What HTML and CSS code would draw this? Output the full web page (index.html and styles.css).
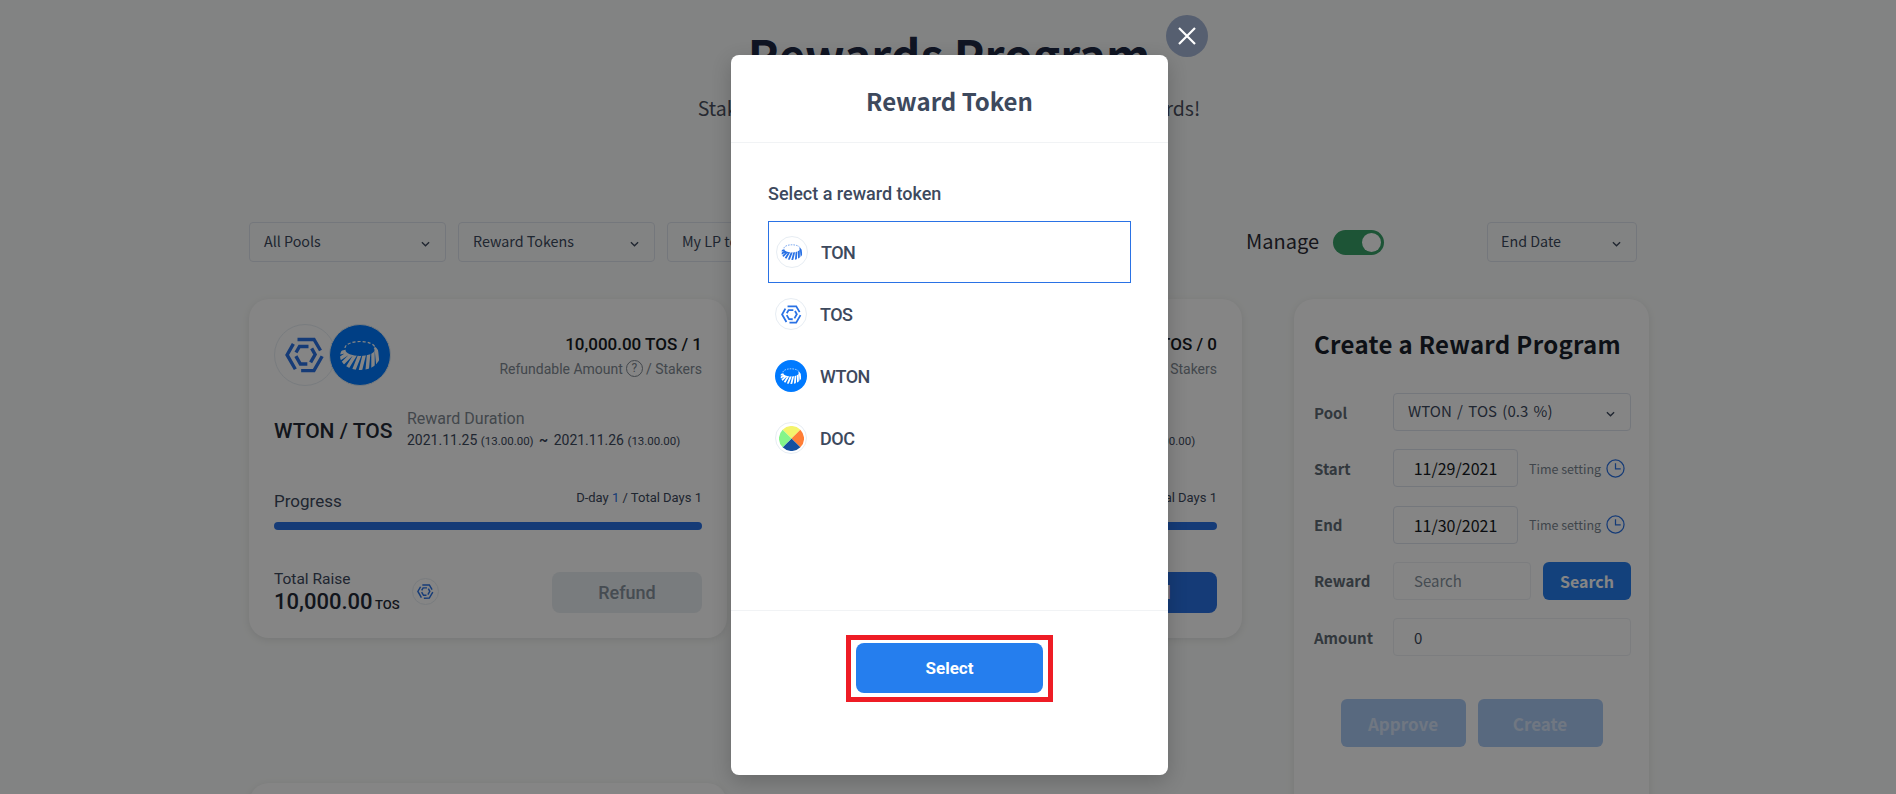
FILE: index.html
```html
<!DOCTYPE html>
<html lang="en">
<head>
  <meta charset="UTF-8">
  <meta name="viewport" content="width=device-width, initial-scale=1.0">
  <title>Rewards Program</title>
  <link rel="stylesheet" href="styles.css">
</head>
<body>
  <!-- Icons -->
  <svg class="defs" width="0" height="0">
    <clipPath id="ton-ring">
      <path clip-rule="evenodd" d="M0 16a20 14 0 1 0 40 0a20 14 0 1 0 -40 0ZM5.500 10a14.500 6 0 1 0 29 0a14.500 6 0 1 0 -29 0Z"/>
    </clipPath>
    <symbol id="i-tos" viewBox="0 0 40 40">
      <g fill="none" stroke="currentColor" stroke-width="3.400">
        <g id="tos-arm">
          <path d="M12.500 4.500H29L35.500 15.500"/>
          <path d="M11 17.500L14.500 11.500H23.500"/>
        </g>
        <use href="#tos-arm" transform="rotate(120 20 20)"/>
        <use href="#tos-arm" transform="rotate(240 20 20)"/>
      </g>
    </symbol>
    <symbol id="i-ton" viewBox="0 0 40 30">
      <g fill="none" stroke="currentColor">
        <path d="M5 8A15 6.500 0 0 1 35 8" stroke-width="1.200" stroke-dasharray="3 2"/>
        <g clip-path="url(#ton-ring)">
          <path d="M-1 13L8 11M-2 20L10 12M0 26L14 12M6 30L17 12M13 32L21 12M20 32L25 12M27 32L29 10M33 30L33 8M38 26L36 6" stroke-width="3.400"/>
        </g>
      </g>
    </symbol>
    <symbol id="i-chevron" viewBox="0 0 10 6">
      <path d="M1 1l4 4 4-4" fill="none" stroke="currentColor" stroke-width="1.500"/>
    </symbol>
    <symbol id="i-clock" viewBox="0 0 20 20">
      <circle cx="10" cy="10" r="9" fill="none" stroke="currentColor" stroke-width="1.300"/>
      <path d="M10 4.500V10.500H15.500" fill="none" stroke="currentColor" stroke-width="1.300"/>
    </symbol>
  </svg>

  <div class="page">
    <header class="intro">
      <h1>Rewards Program</h1>
      <p>Stake in Uniswap V3 pools and earn additional rewards!</p>
    </header>

    <div class="filters">
      <div class="select select-pools"><span>All Pools</span> <svg class="chevron"><use href="#i-chevron"/></svg></div>
      <div class="select select-pools"><span>Reward Tokens</span> <svg class="chevron"><use href="#i-chevron"/></svg></div>
      <div class="select select-pools"><span>My LP tokens</span> <svg class="chevron"><use href="#i-chevron"/></svg></div>
      <div class="manage">
        <span>Manage</span>
        <span class="toggle"><span class="knob"></span></span>
      </div>
      <div class="select select-date"><span>End Date</span> <svg class="chevron"><use href="#i-chevron"/></svg></div>
    </div>

    <main class="board">
      <!-- Reward card -->
      <section class="card">
        <div class="card-top">
          <div class="pair">
            <span class="coin coin-tos"><svg class="coin-tos-mark"><use href="#i-tos"/></svg></span>
            <span class="coin coin-ton"><svg class="coin-ton-mark"><use href="#i-ton"/></svg></span>
          </div>
          <div class="refund-info">
            <div class="amount">10,000.00 TOS / 1</div>
            <div class="amount-sub">Refundable Amount <span class="help">?</span> / Stakers</div>
          </div>
        </div>
        <div class="card-name">
          <h3>WTON / TOS</h3>
          <div class="duration">
            <div class="duration-label">Reward Duration</div>
            <div class="dates">2021.11.25 <small>(13.00.00)</small> <b>~</b> 2021.11.26 <small>(13.00.00)</small></div>
          </div>
        </div>
        <div class="progress-head">
          <span class="progress-label">Progress</span>
          <span class="days">D-day <em>1</em> / Total Days 1</span>
        </div>
        <div class="bar"></div>
        <div class="card-foot">
          <div class="raise">
            <div class="raise-label">Total Raise</div>
            <div class="raise-value">10,000.00 <small>TOS</small></div>
          </div>
          <span class="coin-mini"><svg><use href="#i-tos"/></svg></span>
          <button class="refund">Refund</button>
        </div>
      </section>

      <section class="card">
        <div class="card-top">
          <div class="pair">
            <span class="coin coin-tos"><svg class="coin-tos-mark"><use href="#i-tos"/></svg></span>
            <span class="coin coin-ton"><svg class="coin-ton-mark"><use href="#i-ton"/></svg></span>
          </div>
          <div class="refund-info">
            <div class="amount">10,000.00 TOS / 0</div>
            <div class="amount-sub">Refundable Amount <span class="help">?</span> / Stakers</div>
          </div>
        </div>
        <div class="card-name">
          <h3>WTON / TOS</h3>
          <div class="duration">
            <div class="duration-label">Reward Duration</div>
            <div class="dates">2021.11.25 <small>(13.00.00)</small> <b>~</b> 2021.11.26 <small>(13.00.00)</small></div>
          </div>
        </div>
        <div class="progress-head">
          <span class="progress-label">Progress</span>
          <span class="days">D-day <em>1</em> / Total Days 1</span>
        </div>
        <div class="bar"></div>
        <div class="card-foot">
          <div class="raise">
            <div class="raise-label">Total Raise</div>
            <div class="raise-value">10,000.00 <small>TOS</small></div>
          </div>
          <span class="coin-mini"><svg><use href="#i-tos"/></svg></span>
          <button class="refund refund-on">Refund</button>
        </div>
      </section>

      <!-- Create form -->
      <aside class="card create">
        <h2>Create a Reward Program</h2>
        <div class="form">
          <div class="row">
            <label>Pool</label>
            <div class="select select-form"><span>WTON / TOS (0.3 %)</span> <svg class="chevron"><use href="#i-chevron"/></svg></div>
          </div>
          <div class="row">
            <label>Start</label>
            <div class="date">11/29/2021</div>
            <span class="time">Time setting</span>
            <svg class="clock"><use href="#i-clock"/></svg>
          </div>
          <div class="row">
            <label>End</label>
            <div class="date">11/30/2021</div>
            <span class="time">Time setting</span>
            <svg class="clock"><use href="#i-clock"/></svg>
          </div>
          <div class="row">
            <label>Reward</label>
            <div class="field field-search">Search</div>
            <button class="search">Search</button>
          </div>
          <div class="row">
            <label>Amount</label>
            <div class="field field-amount">0</div>
          </div>
        </div>
        <div class="actions">
          <button class="action">Approve</button>
          <button class="action">Create</button>
        </div>
      </aside>

      <section class="card card-empty"></section>
    </main>
  </div>

  <!-- Modal -->
  <div class="overlay">
    <div class="modal">
      <button class="close" aria-label="Close">
        <svg width="20" height="20" viewBox="0 0 20 20"><path d="M2 2L18 18M18 2L2 18" stroke="#fff" stroke-width="2.200" fill="none"/></svg>
      </button>
      <div class="modal-head">Reward Token</div>
      <div class="modal-body">
        <div class="modal-label">Select a reward token</div>
        <div class="token token-on">
          <span class="token-icon"><svg class="mark-ton"><use href="#i-ton"/></svg></span>TON
        </div>
        <div class="token">
          <span class="token-icon"><svg class="mark-tos"><use href="#i-tos"/></svg></span>TOS
        </div>
        <div class="token">
          <span class="token-icon token-icon-wton"><svg class="mark-ton"><use href="#i-ton"/></svg></span>WTON
        </div>
        <div class="token">
          <span class="token-icon">
            <svg class="mark-doc" viewBox="0 0 24 24">
              <path d="M12 12L3.500 3.500A12 12 0 0 1 20.500 3.500Z" fill="#f4f46c"/>
              <path d="M12 12L20.500 3.500A12 12 0 0 1 20.500 20.500Z" fill="#ff7e36"/>
              <path d="M12 12L20.500 20.500A12 12 0 0 1 3.500 20.500Z" fill="#1650a0"/>
              <path d="M12 12L3.500 20.500A12 12 0 0 1 3.500 3.500Z" fill="#84f58a"/>
            </svg>
          </span>DOC
        </div>
      </div>
      <div class="modal-foot">
        <div class="highlight">
          <button class="select-btn">Select</button>
        </div>
      </div>
    </div>
  </div>
</body>
</html>
```

FILE: styles.css
```css
/* Page */
body {
  margin: 0;
  height: 794px;
  overflow: hidden;
  position: relative;
  background-color: #fafcfb;
  color: #1a202c;
  font-family: "Noto Sans CJK KR", "Noto Sans", sans-serif;
}

button {
  border: none;
  font-family: inherit;
}

.defs {
  position: absolute;
}

.page {
  width: 1400px;
  margin-left: 249px;
}

.intro {
  text-align: center;
  height: 222px;
}

.intro h1 {
  margin: 0;
  padding-top: 24px;
  font-size: 46px;
  line-height: 60px;
  font-weight: 700;
  color: #1f2a44;
}

.intro p {
  margin: 11px 0 0;
  font-size: 19.500px;
  line-height: 26px;
  color: #4a5060;
}

/* Filters */
.filters {
  display: flex;
  align-items: center;
  gap: 12px;
  padding-right: 12px;
}

.select {
  display: flex;
  align-items: center;
  justify-content: space-between;
  box-sizing: border-box;
  height: 40px;
  padding: 0 15px 0 14px;
  border: 1px solid #dfe4ee;
  border-radius: 4px;
  font-size: 14.300px;
  color: #3d495d;
}

.select span {
  margin-top: -4px;
}

.select-pools {
  width: 197px;
}

.select-date {
  width: 150px;
  padding-left: 13px;
}

.select-form {
  width: 238px;
  height: 38px;
  font-size: 15px;
  word-spacing: 2px;
}

.chevron {
  width: 9px;
  height: 6px;
  margin-top: 3px;
  color: #3d495d;
}

.manage {
  display: flex;
  align-items: center;
  gap: 14px;
  margin-left: auto;
  margin-right: 91px;
  font-size: 20px;
  color: #2b2b35;
}

.manage > span:first-child {
  margin-top: -4px;
}

.toggle {
  display: flex;
  justify-content: flex-end;
  align-items: center;
  box-sizing: border-box;
  width: 51px;
  height: 25px;
  padding: 3px;
  border-radius: 13px;
  background-color: #38a169;
}

.knob {
  width: 19px;
  height: 19px;
  border-radius: 50%;
  background-color: #fff;
}

/* Cards */
.board {
  display: grid;
  grid-template-columns: 478px 478px 355px;
  grid-template-rows: 339px 300px;
  column-gap: 37px;
  row-gap: 145px;
  margin-top: 37px;
}

.card {
  box-sizing: border-box;
  padding: 25px;
  background-color: #fff;
  border-radius: 20px;
  box-shadow: 0 2px 8px rgba(0, 0, 0, 0.1);
  font-family: Roboto, sans-serif;
}

.create {
  grid-column: 3;
  grid-row: 1 / span 2;
  margin-left: 15px;
  width: 355px;
  padding: 20px 18px 0 20px;
  font-family: "Noto Sans CJK KR", "Noto Sans", sans-serif;
}

.card-empty {
  grid-row: 2;
}

.card-top {
  display: flex;
  justify-content: space-between;
  align-items: center;
}

.pair {
  display: flex;
}

.coin {
  display: flex;
  align-items: center;
  justify-content: center;
  box-sizing: border-box;
  width: 62px;
  height: 62px;
  border: 1px solid #e7edf3;
  border-radius: 50%;
  background-color: #fff;
}

.coin-ton {
  margin-left: -7px;
  background-color: #007aff;
  color: #fff;
}

.coin-tos {
  color: #2a72e5;
}

.coin-tos-mark {
  width: 40px;
  height: 40px;
}

.coin-ton-mark {
  width: 40px;
  height: 30px;
}

.refund-info {
  text-align: right;
}

.amount {
  font-size: 17px;
  line-height: 24px;
  font-weight: 500;
  color: #161a22;
}

.amount-sub {
  display: flex;
  justify-content: flex-end;
  align-items: center;
  gap: 3px;
  margin-top: 3px;
  font-size: 14px;
  line-height: 20px;
  color: #808992;
}

.help {
  display: inline-block;
  width: 15px;
  height: 15px;
  border: 1px solid #808992;
  border-radius: 50%;
  font-size: 12px;
  line-height: 15px;
  text-align: center;
}

.card-name {
  display: flex;
  align-items: center;
  margin-top: 23px;
}

.card-name h3 {
  flex: none;
  width: 133px;
  margin: 0;
  font-size: 21px;
  line-height: 30px;
  font-weight: 500;
  white-space: nowrap;
  color: #232a36;
}

.duration-label {
  font-size: 16px;
  line-height: 20px;
  color: #808992;
}

.dates {
  font-size: 14px;
  line-height: 22px;
  white-space: nowrap;
  color: #3d495d;
}

.dates small {
  font-size: 11.500px;
}

.dates b {
  margin: 0 2px;
}

.progress-head {
  display: flex;
  justify-content: space-between;
  align-items: flex-start;
  margin-top: 36px;
  height: 34px;
}

.progress-label {
  font-size: 17px;
  line-height: 26px;
  color: #3d495d;
}

.days {
  font-size: 13px;
  line-height: 20px;
  color: #3d495d;
}

.days em {
  font-style: normal;
  color: #2a72e5;
}

.bar {
  height: 8px;
  border-radius: 4px;
  background-color: #2a72e5;
}

.card-foot {
  display: flex;
  align-items: flex-start;
  margin-top: 40px;
}

.raise {
  width: 138px;
}

.raise-label {
  font-size: 15.500px;
  line-height: 19px;
  color: #3d495d;
}

.raise-value {
  font-size: 22px;
  line-height: 26px;
  font-weight: 500;
  white-space: nowrap;
  color: #232a36;
}

.raise-value small {
  margin-left: -3px;
  font-size: 13px;
}

.coin-mini {
  display: flex;
  align-items: center;
  justify-content: center;
  box-sizing: border-box;
  width: 27px;
  height: 27px;
  margin-top: 8px;
  border: 1px solid #e7edf3;
  border-radius: 50%;
  color: #2a72e5;
}

.coin-mini svg {
  width: 17px;
  height: 17px;
}

.refund {
  width: 150px;
  height: 41px;
  margin-top: 2px;
  margin-left: auto;
  border-radius: 8px;
  background-color: #e9edf1;
  color: #86929d;
  font-size: 18px;
  font-weight: 500;
  font-family: Roboto, sans-serif;
}

.refund-on {
  background-color: #2a72e5;
  color: #fff;
}

/* Create form */
.create h2 {
  margin: 0;
  font-size: 24px;
  line-height: 50px;
  letter-spacing: 0.300px;
  color: #1a1f2b;
}

.form {
  display: flex;
  flex-direction: column;
  gap: 18.300px;
  margin-top: 24px;
}

.row {
  display: flex;
  align-items: center;
  height: 38px;
}

.row label {
  width: 79px;
  flex: none;
  font-size: 15px;
  font-weight: 700;
  color: #616b76;
}

.date,
.field {
  display: flex;
  align-items: center;
  box-sizing: border-box;
  height: 38px;
  border: 1px solid #dfe4ee;
  border-radius: 4px;
  font-size: 16px;
}

.date {
  justify-content: center;
  width: 125px;
  color: #161a22;
}

.time {
  margin-left: 11px;
  font-size: 12.500px;
  color: #7a8591;
}

.clock {
  width: 19px;
  height: 19px;
  margin-left: 5px;
  color: #2a72e5;
}

.field {
  padding-left: 20px;
  border-color: #edf0f4;
}

.field-search {
  width: 138px;
  font-size: 15px;
  color: #86929d;
}

.field-amount {
  width: 238px;
  font-size: 15px;
  color: #3d495d;
}

.search {
  width: 88px;
  height: 38px;
  margin-left: 12px;
  border-radius: 6px;
  background-color: #257eee;
  color: #fff;
  font-size: 16px;
  font-weight: 700;
}

.actions {
  display: flex;
  justify-content: center;
  gap: 12px;
  margin-top: 43px;
  margin-left: -2px;
}

.action {
  width: 125px;
  height: 48px;
  border-radius: 6px;
  background-color: #aac9f3;
  color: #d7e5f9;
  font-size: 17px;
  font-weight: 700;
}

/* Modal */
.overlay {
  position: absolute;
  inset: 0;
  display: flex;
  justify-content: center;
  padding: 55px 0 0 3px;
  background-color: rgba(0, 0, 0, 0.48);
}

.modal {
  position: relative;
  display: flex;
  flex-direction: column;
  width: 437px;
  height: 720px;
  background-color: #fff;
  border-radius: 8px;
  box-shadow: 0 6px 20px rgba(0, 0, 0, 0.2);
}

.close {
  position: absolute;
  top: -40px;
  right: -40px;
  display: flex;
  align-items: center;
  justify-content: center;
  width: 42px;
  height: 42px;
  padding: 0;
  border-radius: 50%;
  background-color: #565f70;
}

.modal-head {
  height: 87px;
  border-bottom: 1px solid #f1f3f5;
  text-align: center;
  font-size: 24px;
  font-weight: 700;
  line-height: 92px;
  color: #3d495d;
}

.modal-body {
  flex: 1;
  padding: 0 37px;
}

.modal-label {
  margin-top: 38px;
  margin-bottom: 14px;
  font-family: Roboto, sans-serif;
  font-size: 18px;
  font-weight: 500;
  line-height: 26px;
  color: #3d495d;
}

.token {
  display: flex;
  align-items: center;
  box-sizing: border-box;
  height: 62px;
  padding-left: 7px;
  font-family: Roboto, sans-serif;
  font-size: 18px;
  font-weight: 500;
  letter-spacing: -0.500px;
  color: #3d495d;
}

.token-on {
  border: 1px solid #2a72e5;
}

.token-icon {
  display: flex;
  align-items: center;
  justify-content: center;
  box-sizing: border-box;
  width: 32px;
  height: 32px;
  margin-right: 13px;
  border: 1px solid #e7edf3;
  border-radius: 50%;
  color: #2a72e5;
}

.token-icon-wton {
  border: none;
  background-color: #007aff;
  color: #fff;
}

.mark-ton {
  width: 22px;
  height: 16px;
}

.mark-tos {
  width: 21px;
  height: 21px;
}

.mark-doc {
  width: 25px;
  height: 25px;
}

.modal-foot {
  display: flex;
  justify-content: center;
  align-items: flex-start;
  height: 165px;
  padding-top: 24px;
  box-sizing: border-box;
  border-top: 1px solid #f1f3f5;
}

.highlight {
  padding: 3px 5px 4px;
  border: 5px solid #ee1c25;
}

.select-btn {
  display: block;
  width: 187px;
  height: 50px;
  border-radius: 8px;
  background-color: #257eee;
  color: #fff;
  font-family: Roboto, sans-serif;
  font-size: 17px;
  font-weight: 700;
}
```
